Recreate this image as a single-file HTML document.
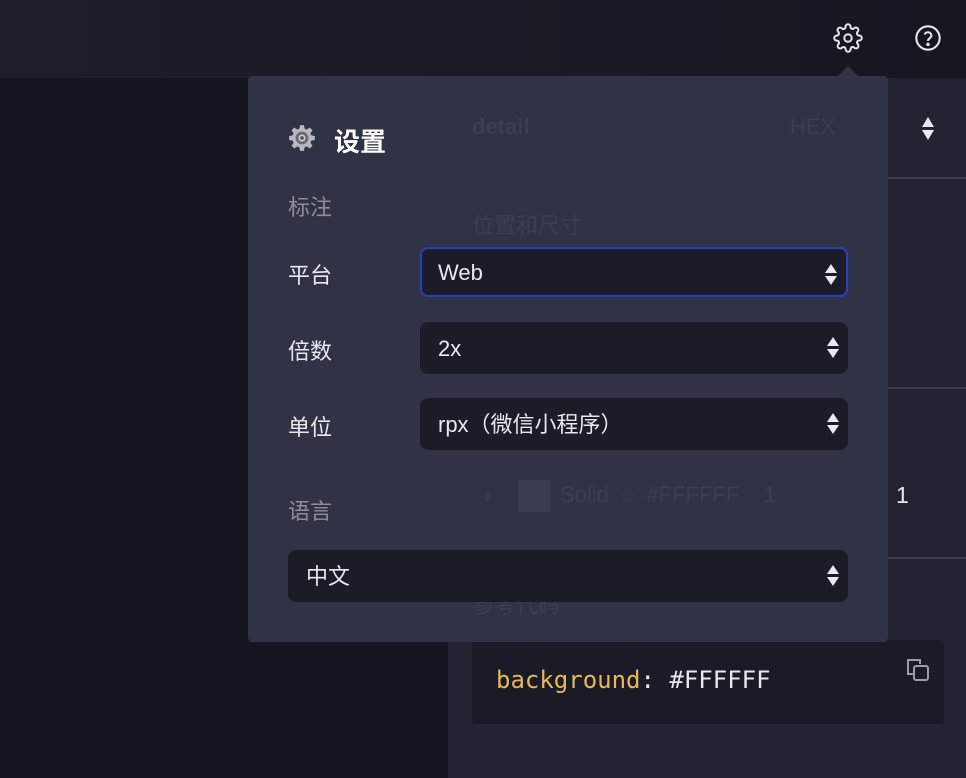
<!DOCTYPE html>
<html><head><meta charset="utf-8"><style>
*{margin:0;padding:0;box-sizing:border-box}
body{width:966px;height:778px;background:#131621;position:relative;overflow:hidden;font-family:"Liberation Sans","Noto Sans CJK SC",sans-serif;color:#e8e8ee}
.top{position:absolute;left:0;top:0;width:966px;height:78px;background:linear-gradient(90deg,#1c1e2a,#141620)}
.right{position:absolute;left:448px;top:78px;width:518px;height:700px;background:#212331}
.hr{position:absolute;left:448px;width:518px;height:2px;background:#3a3c4a}
.faint{position:absolute;color:#3b3e52;font-size:22px}
.code{position:absolute;left:472px;top:640px;width:472px;height:84px;background:#1a1b26;border-radius:4px}
.code span{position:absolute;left:24px;top:26px;font-family:"DejaVu Sans Mono","Liberation Mono",monospace;font-size:24px;color:#e8e8ee}
.pop{position:absolute;left:248px;top:76px;width:640px;height:566px;background:#303245;border-radius:4px}
.arrow{position:absolute;left:838px;top:66px;width:0;height:0;border-left:10px solid transparent;border-right:10px solid transparent;border-bottom:10px solid #303245}
.lbl{position:absolute;left:40px;font-size:22px}
.sel{position:absolute;background:#1b1c28;border-radius:8px;height:52px;font-size:22px;padding-left:18px;line-height:54px}
.sel:after{content:"";position:absolute;right:9px;top:15px;width:0;height:0;border-left:6px solid transparent;border-right:6px solid transparent;border-bottom:9px solid #e8e8ee}
.sel:before{content:"";position:absolute;right:9px;top:27px;width:0;height:0;border-left:6px solid transparent;border-right:6px solid transparent;border-top:9px solid #e8e8ee}
</style></head><body>
<div class="top"></div>
<svg style="position:absolute;left:833px;top:23px" width="30" height="30" viewBox="0 0 24 24" fill="none" stroke="#e4e4ea" stroke-width="1.6"><circle cx="12" cy="12" r="3"/><path d="M19.4 15a1.65 1.65 0 00.33 1.82l.06.06a2 2 0 01-2.830 2.83l-.06-.06a1.65 1.65 0 00-1.82-.33 1.65 1.65 0 00-1 1.51V21a2 2 0 01-4 0v-.09A1.65 1.65 0 009 19.4a1.65 1.65 0 00-1.82.33l-.06.06a2 2 0 01-2.83-2.83l.06-.06a1.65 1.65 0 00.33-1.82 1.65 1.65 0 00-1.51-1H3a2 2 0 010-4h.09A1.65 1.65 0 004.6 9a1.65 1.65 0 00-.33-1.82l-.06-.06a2 2 0 012.83-2.830l.06.06a1.65 1.65 0 001.82.33H9a1.65 1.65 0 001-1.51V3a2 2 0 014 0v.09a1.65 1.65 0 001 1.51 1.65 1.65 0 001.82-.33l.06-.06a2 2 0 012.83 2.83l-.06.06a1.65 1.65 0 00-.33 1.82V9a1.65 1.65 0 001.51 1H21a2 2 0 010 4h-.09a1.65 1.65 0 00-1.51 1z"/></svg>
<svg style="position:absolute;left:914px;top:24px" width="28" height="28" viewBox="0 0 24 24" fill="none" stroke="#e4e4ea" stroke-width="1.8"><circle cx="12" cy="12" r="10"/><path d="M9.1 9a3 3 0 015.8 1c0 2-3 2.5-3 4.5"/><circle cx="12" cy="17.5" r=".6" fill="#e4e4ea"/></svg>
<div class="right"></div>
<div class="hr" style="top:177px"></div>
<div class="hr" style="top:387px"></div>
<div class="hr" style="top:557px"></div>
<div style="position:absolute;left:922px;top:117px;border-left:6px solid transparent;border-right:6px solid transparent;border-bottom:10px solid #e8e8ee"></div>
<div style="position:absolute;left:922px;top:130px;border-left:6px solid transparent;border-right:6px solid transparent;border-top:10px solid #e8e8ee"></div>
<div style="position:absolute;left:896px;top:482px;font-size:23px;color:#e8e8ee">1</div>
<div class="code"><span><span style="position:static;color:#e8b75a">background</span>: #FFFFFF</span></div>
<svg style="position:absolute;left:904px;top:656px" width="28" height="28" viewBox="0 0 28 28" fill="none" stroke="#9a9ca8" stroke-width="2"><path d="M9 18H4V4h12v4"/><rect x="10" y="10" width="14" height="14" rx="2"/></svg>
<div class="arrow"></div>
<div class="pop">
<div class="faint" style="left:224px;top:38px;font-weight:bold">detail</div>
<div class="faint" style="left:542px;top:38px">HEX</div>
<div class="faint" style="left:224px;top:132px">位置和尺寸</div>
<div class="faint" style="left:236px;top:406px">›</div>
<div style="position:absolute;left:270px;top:404px;width:32px;height:32px;background:#3a3c50"></div>
<div class="faint" style="left:312px;top:406px">Solid &nbsp;◌ &nbsp;#FFFFFF &nbsp;&nbsp;&nbsp;1</div>
<div class="faint" style="left:224px;top:512px">参考代码</div>
<svg style="position:absolute;left:40px;top:48px" width="28" height="28" viewBox="0 0 24 24"><path fill="#b8b8be" d="M10.3 1h3.4l.5 3 1.9.8 2.5-1.8 2.4 2.4-1.8 2.5.8 1.9 3 .5v3.4l-3 .5-.8 1.9 1.8 2.5-2.4 2.4-2.5-1.8-1.9.8-.5 3h-3.4l-.5-3-1.9-.8-2.5 1.8-2.4-2.4 1.8-2.5-.8-1.9-3-.5v-3.4l3-.5.8-1.9L3 5.4 5.4 3l2.5 1.8 1.9-.8z"/><circle cx="12" cy="12" r="5.5" fill="#6a6a70"/><circle cx="12" cy="12" r="3" fill="#d0d0d4"/><circle cx="12" cy="12" r="1.6" fill="#555"/></svg>
<div style="position:absolute;left:86px;top:46px;font-size:26px;font-weight:bold;color:#fff">设置</div>
<div class="lbl" style="top:114px;color:#8c8e9c">标注</div>
<div class="lbl" style="top:182px">平台</div>
<div class="sel" style="left:172px;top:171px;width:428px;height:50px;line-height:48px;border:2px solid #2443b8;padding-left:16px">Web</div>
<div class="lbl" style="top:258px">倍数</div>
<div class="sel" style="left:172px;top:246px;width:428px">2x</div>
<div class="lbl" style="top:334px">单位</div>
<div class="sel" style="left:172px;top:322px;width:428px">rpx（微信小程序）</div>
<div class="lbl" style="top:418px;color:#8c8e9c">语言</div>
<div class="sel" style="left:40px;top:474px;width:560px">中文</div>
</div>
</body></html>
